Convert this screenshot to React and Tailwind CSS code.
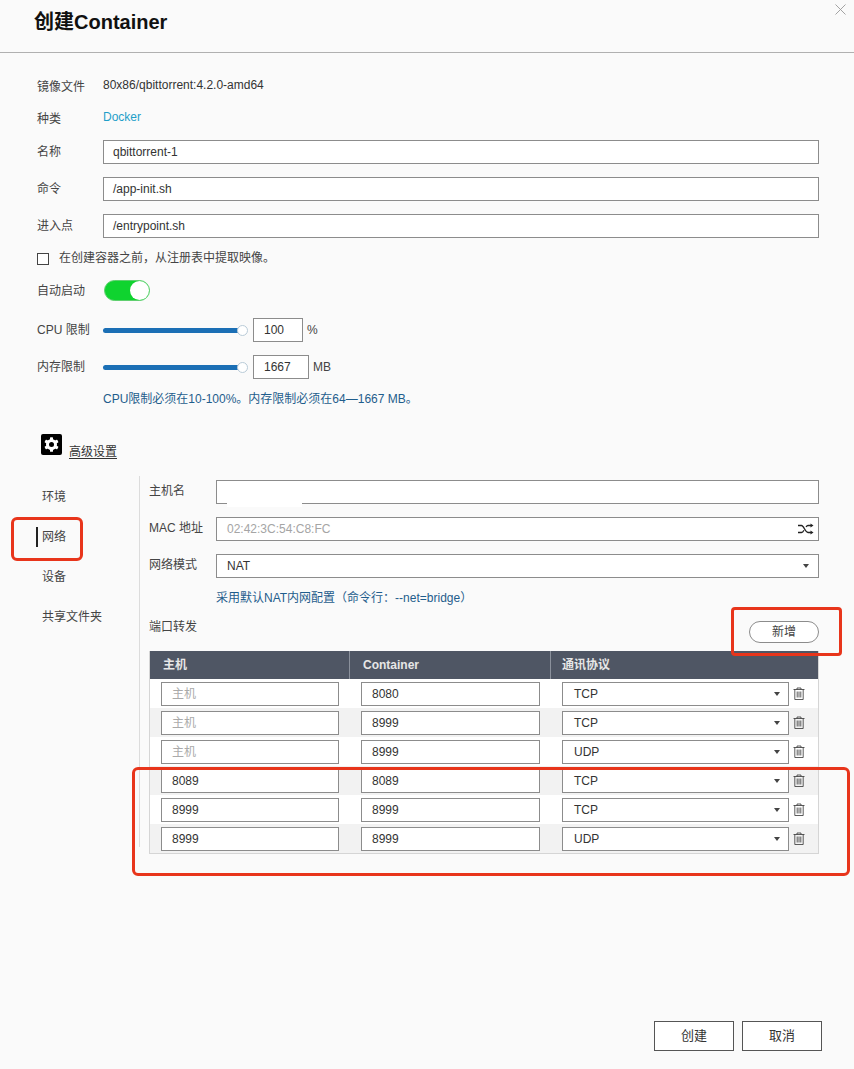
import React from 'react';

const FONT = "font-['Liberation_Sans','Noto_Sans_CJK_SC',sans-serif]";

const PORT_ROWS = [
  { host: '', container: '8080', proto: 'TCP' },
  { host: '', container: '8999', proto: 'TCP' },
  { host: '', container: '8999', proto: 'UDP' },
  { host: '8089', container: '8089', proto: 'TCP' },
  { host: '8999', container: '8999', proto: 'TCP' },
  { host: '8999', container: '8999', proto: 'UDP' },
];

const Caret = () => (
  <span className="w-0 h-0 border-x-[3px] border-x-transparent border-t-[4px] border-t-[#444]" />
);

const Field = ({ className = '', children }) => (
  <div className={`h-6 flex items-center bg-white border border-[#8c8c8c] text-xs text-[#333] ${className}`}>
    {children}
  </div>
);

const TrashIcon = () => (
  <svg width="12" height="13" viewBox="0 0 12 13" fill="none" stroke="#333" strokeWidth="0.800">
    <path d="M0.500 2.500h11M4 2.500V1h4v1.500M1.800 2.500v10h8.400v-10M4.200 4.500v6M6 4.500v6M7.800 4.500v6" />
  </svg>
);

const ShuffleIcon = () => (
  <svg width="16" height="12" viewBox="0 0 16 12" fill="none" stroke="#222" strokeWidth="1.300">
    <path d="M0 2.500h3.500c2.500 0 3.500 7 6.500 7h3M0 9.500h3.500c1 0 1.800-1 2.400-2.200M8 4c.6-.9 1.200-1.500 2-1.500h3" />
    <path d="M12.500 0.500l3 2-3 2zM12.500 7.500l3 2-3 2z" fill="#222" stroke="none" />
  </svg>
);

const GearIcon = () => (
  <svg width="21" height="21" viewBox="0 0 21 21">
    <rect width="21" height="21" rx="2" fill="#000" />
    <g fill="#fff">
      <circle cx="10.500" cy="10.500" r="5.500" />
      <rect x="9" y="3.200" width="3" height="14.600" rx="0.600" />
      <rect x="9" y="3.200" width="3" height="14.600" rx="0.600" transform="rotate(60 10.500 10.500)" />
      <rect x="9" y="3.200" width="3" height="14.600" rx="0.600" transform="rotate(120 10.500 10.500)" />
    </g>
    <circle cx="10.500" cy="10.500" r="2.500" fill="#000" />
  </svg>
);

const Slider = () => (
  <div className="relative w-[140px] h-[5px] rounded-full bg-[#1b6fb5]">
    <span className="absolute right-[-5px] top-[-3px] w-[11px] h-[11px] rounded-full bg-white border border-[#b9cbd8]" />
  </div>
);

const FormRow = ({ label, className = '', children }) => (
  <div className={`flex items-center ${className}`}>
    <span className="w-[66px] shrink-0 text-xs text-[#444]">{label}</span>
    {children}
  </div>
);

const SubRow = ({ label, className = '', children }) => (
  <div className={`flex items-center ${className}`}>
    <span className="w-[67px] shrink-0 mt-[-2px] text-xs text-[#444]">{label}</span>
    {children}
  </div>
);

export default function App() {
  return (
    <div className={`${FONT} relative w-[854px] h-[1069px] overflow-hidden bg-[#fafafa] flex flex-col`}>
      <header className="relative h-[53px] shrink-0 border-b border-[#b0b0b0] pl-[34px] flex items-center">
        <h1 className="text-xl font-bold text-[#111] mb-[8px]">创建Container</h1>
        <svg className="absolute right-[8px] top-[4px]" width="11" height="11" viewBox="0 0 11 11" stroke="#999" strokeWidth="0.900">
          <path d="M0.500 0.500l10 10M10.500 0.500l-10 10" />
        </svg>
      </header>

      <section className="pl-[37px] pr-[35px] pt-[26px]">
        <FormRow label="镜像文件" className="h-4">
          <span className="text-xs text-[#333] mt-[-4px]">80x86/qbittorrent:4.2.0-amd64</span>
        </FormRow>
        <FormRow label="种类" className="h-4 mt-[16px]">
          <span className="text-xs text-[#1f9fc9] mt-[-4px]">Docker</span>
        </FormRow>
        <FormRow label="名称" className="mt-[13px]">
          <Field className="flex-1 pl-[9px]">qbittorrent-1</Field>
        </FormRow>
        <FormRow label="命令" className="mt-[13px]">
          <Field className="flex-1 pl-[9px]">/app-init.sh</Field>
        </FormRow>
        <FormRow label="进入点" className="mt-[13px]">
          <Field className="flex-1 pl-[9px]">/entrypoint.sh</Field>
        </FormRow>
        <div className="flex items-center h-4 mt-[13px]">
          <span className="w-3 h-3 border border-[#444] bg-white" />
          <span className="ml-[10px] text-xs text-[#444] mt-[-2px]">在创建容器之前，从注册表中提取映像。</span>
        </div>
        <FormRow label="自动启动" className="mt-[13px]">
          <div className="relative w-[46px] h-[21px] rounded-full bg-[#0fd32f] border border-[#5fcf6f] ml-[1px]">
            <span className="absolute right-0 top-0 w-[19px] h-[19px] rounded-full bg-white" />
          </div>
        </FormRow>
        <FormRow label="CPU 限制" className="mt-[17px]">
          <Slider />
          <Field className="w-[50px] ml-[10px] pl-[10px]">100</Field>
          <span className="ml-[4px] text-xs text-[#444]">%</span>
        </FormRow>
        <FormRow label="内存限制" className="mt-[13px]">
          <Slider />
          <Field className="w-[56px] ml-[10px] pl-[10px]">1667</Field>
          <span className="ml-[4px] text-xs text-[#444]">MB</span>
        </FormRow>
        <p className="ml-[66px] mt-[12px] text-xs text-[#1f5d8c]">CPU限制必须在10-100%。内存限制必须在64—1667 MB。</p>
        <div className="flex items-end ml-[4px] mt-[27px]">
          <GearIcon />
          <span className="ml-[7px] mb-[-5px] text-xs text-[#333] underline underline-offset-2">高级设置</span>
        </div>
      </section>

      <section className="flex pl-[42px] pr-[35px] mt-[21px]">
        <nav className="w-[97px] shrink-0 flex flex-col text-xs text-[#444] pt-[14px] gap-[25px]">
          <span className="h-[15px] leading-[15px]">环境</span>
          <span className="relative h-[15px] leading-[15px]">
            <span className="absolute left-[-6px] top-[-3px] w-[2px] h-5 bg-[#222]" />
            网络
          </span>
          <span className="h-[15px] leading-[15px]">设备</span>
          <span className="h-[15px] leading-[15px]">共享文件夹</span>
        </nav>

        <div className="flex-1 border-l border-[#dcdcdc] pl-[9px] h-[371px] pt-[4px]">
          <SubRow label="主机名">
            <Field className="relative flex-1">
              <span className="absolute left-[10px] top-[6px] w-[75px] h-[20px] bg-white" />
            </Field>
          </SubRow>
          <SubRow label="MAC 地址" className="mt-[13px]">
            <Field className="flex-1 pl-[10px] pr-[4px] justify-between">
              <span className="text-[#a5a5a5]">02:42:3C:54:C8:FC</span>
              <ShuffleIcon />
            </Field>
          </SubRow>
          <SubRow label="网络模式" className="mt-[13px]">
            <Field className="flex-1 pl-[10px] pr-[9px] justify-between">
              NAT
              <Caret />
            </Field>
          </SubRow>
          <p className="ml-[67px] mt-[13px] text-xs leading-[14px] text-[#1f5d8c]">采用默认NAT内网配置（命令行：--net=bridge）</p>
          <div className="flex justify-between items-start mt-[16px]">
            <span className="text-xs text-[#444] mt-[-2px]">端口转发</span>
            <button className="w-[70px] h-[22px] rounded-full border border-[#8c8c8c] bg-white text-xs text-[#444]">新增</button>
          </div>

          <div className="mt-[8px] border border-t-0 border-[#d5d5d5]">
            <div className="flex h-[28px] items-center bg-[#4f5664] text-xs font-bold text-[#e6e6e6]">
              <span className="w-[200px] h-full flex items-center pl-[13px] border-r border-[#8b919c]">主机</span>
              <span className="w-[201px] h-full flex items-center pl-[13px] border-r border-[#8b919c]">Container</span>
              <span className="pl-[11px]">通讯协议</span>
            </div>
            {PORT_ROWS.map((row, i) => (
              <div key={i} className={`flex items-center h-[29px] pl-[11px] ${i % 2 === 1 ? 'bg-[#f2f2f2]' : 'bg-white'}`}>
                <Field className="w-[178px] pl-[10px]">
                  {row.host || <span className="text-[#aaa]">主机</span>}
                </Field>
                <Field className="w-[179px] ml-[22px] pl-[10px]">{row.container}</Field>
                <Field className="w-[227px] ml-[22px] pl-[11px] pr-[8px] justify-between">
                  {row.proto}
                  <Caret />
                </Field>
                <span className="ml-[4px] flex"><TrashIcon /></span>
              </div>
            ))}
          </div>
        </div>
      </section>

      <footer className="mt-auto mb-[18px] pr-[32px] flex justify-end gap-2">
        <button className="w-[80px] h-[30px] border border-[#555] bg-white text-[13px] text-[#333]">创建</button>
        <button className="w-[80px] h-[30px] border border-[#555] bg-white text-[13px] text-[#333]">取消</button>
      </footer>

      {/* red marks someone drew over the screenshot */}
      <div className="absolute left-[11px] top-[517px] w-[72px] h-[44px] border-[3px] border-[#e8351b] rounded-[6px]" />
      <div className="absolute left-[731px] top-[607px] w-[111px] h-[49px] border-[3px] border-[#e8351b] rounded-[4px]" />
      <div className="absolute left-[132px] top-[767px] w-[718px] h-[109px] border-[3px] border-[#e8351b] rounded-[6px]" />
    </div>
  );
}
